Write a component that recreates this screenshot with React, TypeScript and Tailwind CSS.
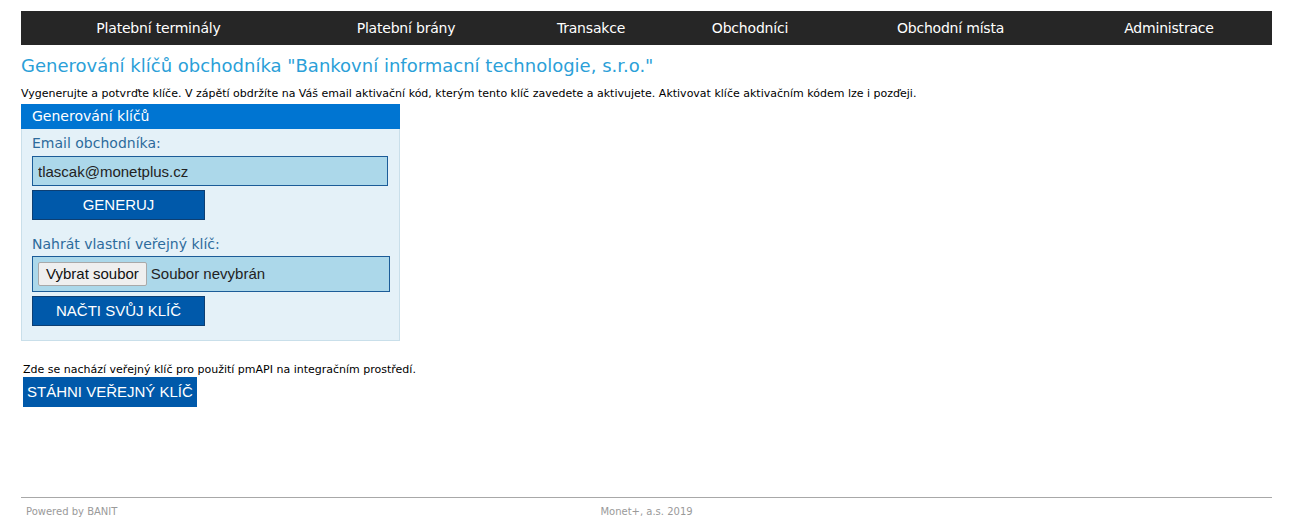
import React, { useState } from "react";

const navItems = [
  "Platební terminály",
  "Platební brány",
  "Transakce",
  "Obchodníci",
  "Obchodní místa",
  "Administrace",
];

const tahoma = "font-['DejaVu_Sans',sans-serif]";
const arial = "font-['Liberation_Sans',Arial,sans-serif]";

function App() {
  const [email, setEmail] = useState("tlascak@monetplus.cz");

  return (
    <div className={`min-h-[526px] bg-white px-[21px] pt-[11px] ${tahoma}`}>
      {/* Top menu */}
      <div className="grid h-[34px] grid-cols-[275px_220px_150px_168px_233px_204px] items-center bg-[#262626] text-[14px] tracking-[-0.2px] text-white">
        {navItems.map((item) => (
          <div key={item} className="text-center">
            {item}
          </div>
        ))}
      </div>

      <h1 className="mt-[9px] text-[18px] leading-[24px] text-[#2b9fd8]">
        Generování klíčů obchodníka "Bankovní informacní technologie, s.r.o."
      </h1>
      <p className="mt-[9px] text-[11px] leading-[14px] text-black">
        Vygenerujte a potvrďte klíče. V zápětí obdržíte na Váš email aktivační kód, kterým tento klíč zavedete a aktivujete. Aktivovat klíče aktivačním kódem lze i pozďeji.
      </p>

      {/* Key generation box */}
      <div className="mt-[3px] w-[379px]">
        <div className="h-[25px] bg-[#0075d2] px-[11px] text-[14px] leading-[25px] text-white">
          Generování klíčů
        </div>
        <div className="border border-t-0 border-[#c9dfea] bg-[#e4f1f8] px-[10px] pb-[14px] pt-[5px]">
          <div className="text-[14px] leading-[18px] text-[#2d6b9c]">Email obchodníka:</div>
          <input
            className={`mt-[4px] block h-[30px] w-[356px] border border-[#1b5c98] bg-[#acd8ea] px-[5px] text-[15px] text-[#222] outline-none ${arial}`}
            value={email}
            onChange={(e) => setEmail(e.target.value)}
          />
          <button
            className={`mt-[4px] block h-[30px] w-[173px] border border-[#0d3f73] bg-[#0059aa] text-[15px] text-white ${arial}`}
          >
            GENERUJ
          </button>

          <div className="mt-[15px] text-[14px] leading-[18px] text-[#2d6b9c]">
            Nahrát vlastní veřejný klíč:
          </div>
          <div className={`mt-[3px] flex h-[36px] w-[358px] items-center border border-[#1b5c98] bg-[#acd8ea] px-[5px] text-[15px] text-[#222] ${arial}`}>
            <span className="flex h-[24px] items-center rounded-[2px] border border-[#a9a9a9] bg-[#efefef] px-[7px] text-[#111]">
              Vybrat soubor
            </span>
            <span className="ml-[4px]">Soubor nevybrán</span>
          </div>
          <button
            className={`mt-[4px] block h-[30px] w-[173px] border border-[#0d3f73] bg-[#0059aa] text-[15px] text-white ${arial}`}
          >
            NAČTI SVŮJ KLÍČ
          </button>
        </div>
      </div>

      {/* Public key */}
      <p className="ml-[2px] mt-[22px] text-[11px] leading-[14px] text-black">
        Zde se nachází veřejný klíč pro použití pmAPI na integračním prostředí.
      </p>
      <button className={`ml-[2px] block h-[30px] whitespace-nowrap bg-[#0059aa] px-[4px] text-[15px] text-white ${arial}`}>
        STÁHNI VEŘEJNÝ KLÍČ
      </button>

      {/* Footer */}
      <div className="mt-[90px] border-t border-[#a8a8a8]">
        <div className="relative flex h-[27px] items-center text-[10px] text-[#9a9a9a]">
          <span className="ml-[5px]">Powered by BANIT</span>
          <span className="absolute left-1/2 -translate-x-1/2">Monet+, a.s. 2019</span>
        </div>
      </div>
    </div>
  );
}

export default App;
